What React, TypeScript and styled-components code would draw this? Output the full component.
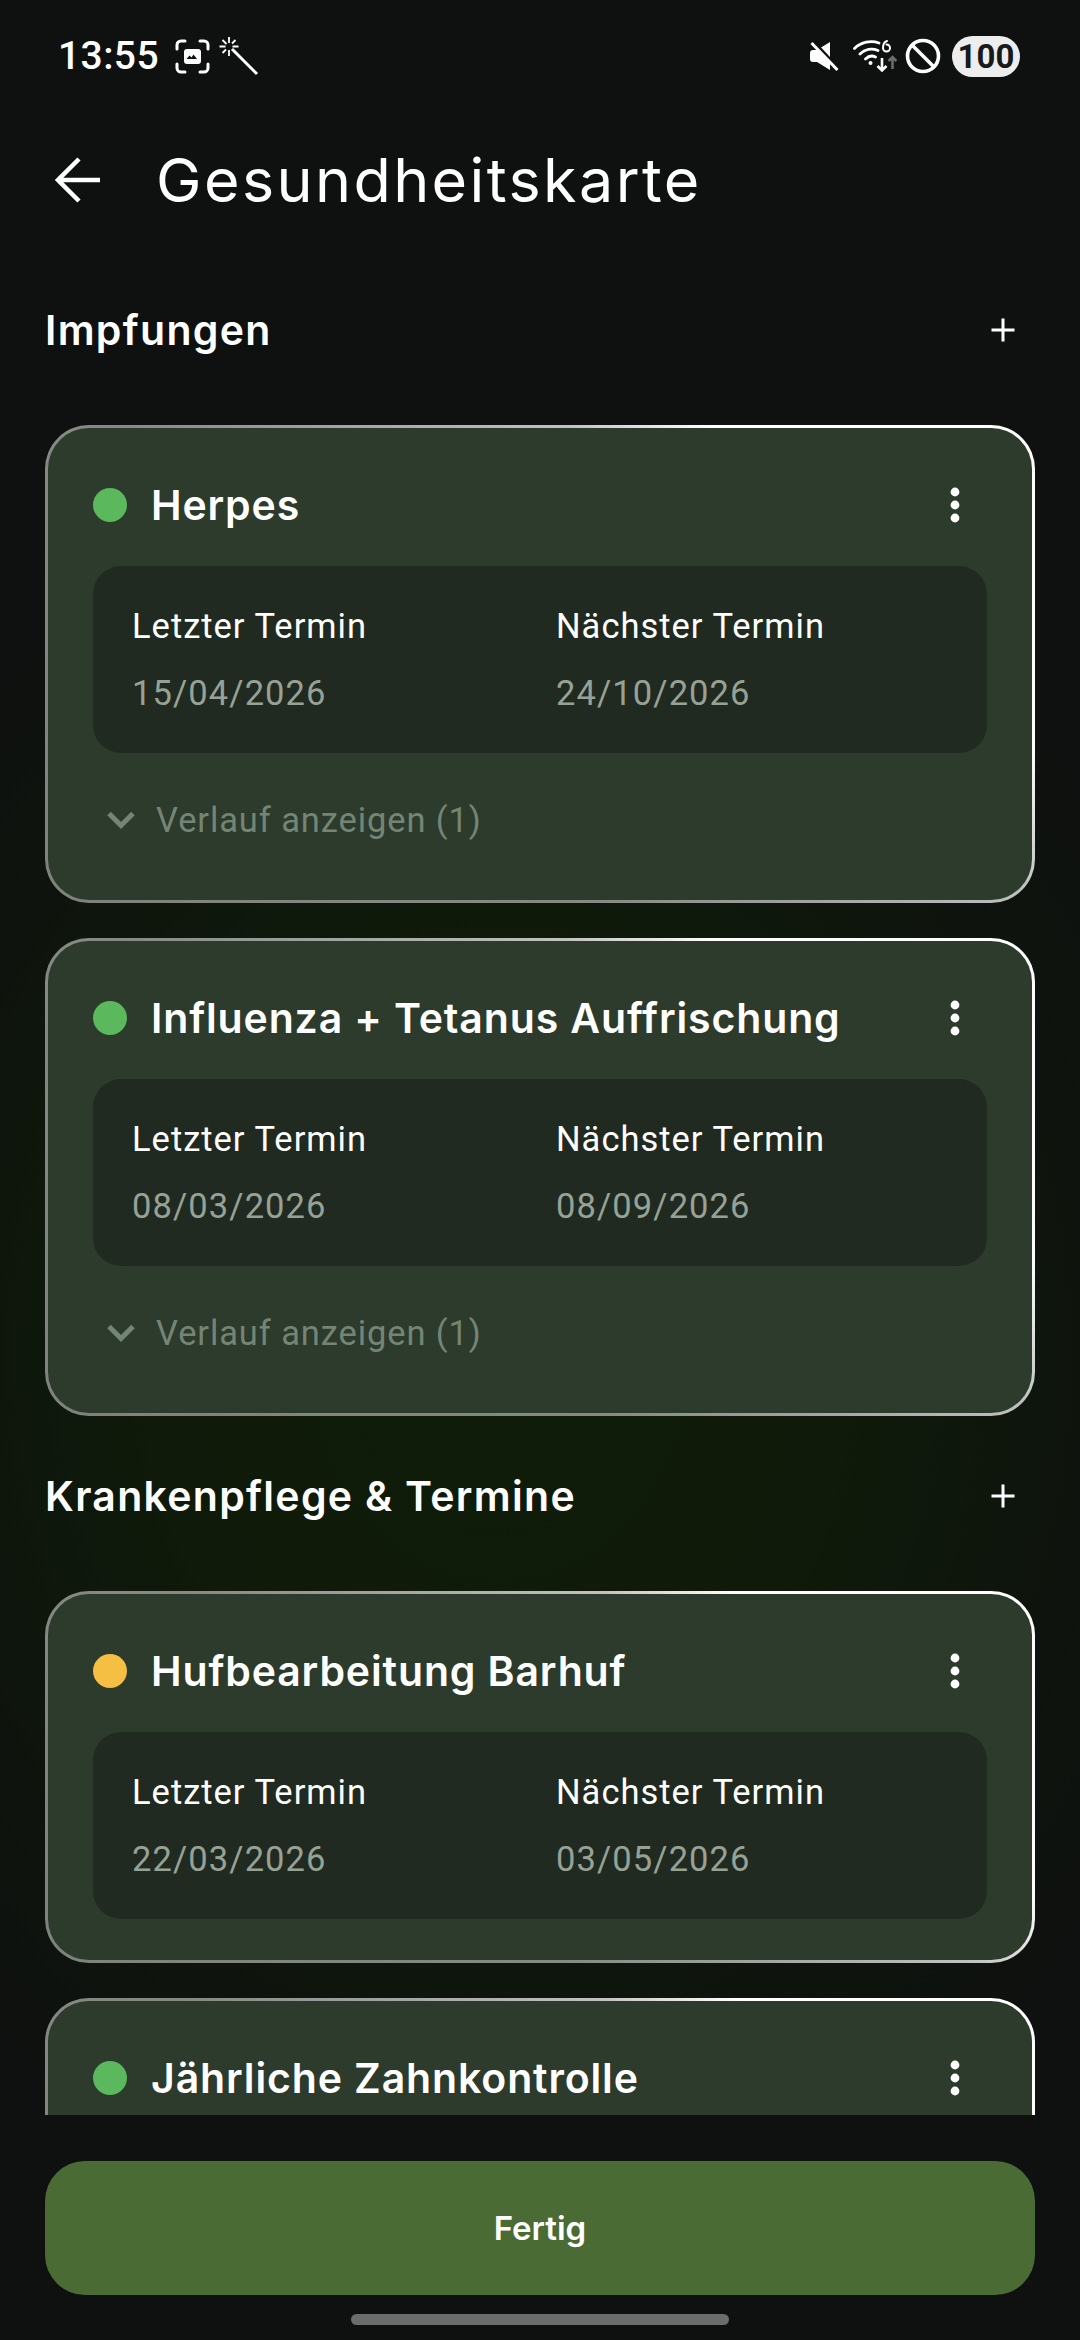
import React from "react";
import styled, { createGlobalStyle } from "styled-components";

const Global = createGlobalStyle`
  html, body { margin: 0; padding: 0; background: #0e110f; }
  * { box-sizing: border-box; }
`;

const Screen = styled.div`
  width: 1080px;
  height: 2340px;
  display: flex;
  flex-direction: column;
  overflow: hidden;
  color: #fff;
  font-family: Roboto, sans-serif;
  background: radial-gradient(ellipse 760px 900px at 46% 58%, #101c09 0%, #0f1a0a 45%, #0e140d 78%, #0e110f 100%), #0e110f;
`;

const StatusBar = styled.div`
  height: 112px;
  flex: none;
  display: flex;
  align-items: center;
  justify-content: space-between;
  padding: 0 60px 0 58px;
`;

const StatusGroup = styled.div`
  display: flex;
  align-items: center;
`;

const Clock = styled.span`
  font-family: Roboto, sans-serif;
  font-size: 39px;
  font-weight: 500;
  letter-spacing: 0.4px;
  margin-right: 16px;
`;

const StatusIcon = styled.svg<{ $gap?: number }>`
  display: block;
  flex: none;
  margin-right: ${(p) => p.$gap ?? 0}px;
`;

const Battery = styled.span`
  width: 68px;
  height: 41px;
  margin-left: 11px;
  border-radius: 21px;
  background: #ecedec;
  color: #17191a;
  font-size: 33px;
  font-weight: 700;
  display: flex;
  align-items: center;
  justify-content: center;
`;

const AppBar = styled.div`
  height: 138px;
  flex: none;
  display: flex;
  align-items: center;
  padding: 0 0 2px 55px;
`;

const Title = styled.h1`
  margin: 0 0 0 55px;
  font-family: Inter, sans-serif;
  font-size: 61px;
  font-weight: 400;
  letter-spacing: 2.4px;
`;

const Scroll = styled.div`
  flex: 1;
  min-height: 0;
  overflow: hidden;
  padding: 0 45px;
`;

const SectionHead = styled.div`
  height: 162px;
  margin-bottom: 13px;
  display: flex;
  align-items: center;
  justify-content: space-between;
  padding: 0 20px 2px 0;
`;

const SectionTitle = styled.h2`
  margin: 0;
  font-family: Inter, sans-serif;
  font-size: 41px;
  font-weight: 600;
  letter-spacing: 1.3px;
`;

const Cards = styled.div`
  display: flex;
  flex-direction: column;
  gap: 35px;
`;

const Card = styled.div`
  border: 3px solid transparent;
  border-radius: 44px;
  padding: 45px 45px 41px;
  background:
    linear-gradient(#2c3b2b, #2c3b2b) padding-box,
    linear-gradient(45deg, #7d827d 0%, #858a85 38%, #c0c2c0 68%, #fff 78%) border-box;
`;

const CardHead = styled.div`
  height: 64px;
  margin-bottom: 29px;
  display: flex;
  align-items: center;
`;

const Dot = styled.span<{ $color: string }>`
  width: 34px;
  height: 34px;
  flex: none;
  border-radius: 50%;
  background: ${(p) => p.$color};
  margin-right: 24px;
`;

const CardTitle = styled.h3`
  margin: 0;
  flex: 1;
  font-family: Inter, sans-serif;
  font-size: 41px;
  font-weight: 600;
  letter-spacing: 0.87px;
`;

const Kebab = styled.svg`
  display: block;
  margin-right: 27px;
`;

const Panel = styled.div`
  height: 187px;
  border-radius: 28px;
  background: #212a20;
  padding: 40px 0 0 39px;
  display: grid;
  grid-template-columns: 424px 1fr;
`;

const Field = styled.div`
  display: flex;
  flex-direction: column;
  gap: 27px;
`;

const Label = styled.span`
  font-size: 34.5px;
  line-height: 40px;
  letter-spacing: 1px;
  color: #fff;
`;

const Value = styled.span`
  font-size: 34.5px;
  line-height: 40px;
  letter-spacing: 1.1px;
  color: #97a296;
`;

const History = styled.div`
  height: 48px;
  margin: 43px 0 15px 13px;
  display: flex;
  align-items: center;
  gap: 20px;
  font-size: 34.5px;
  letter-spacing: 0.9px;
  color: #748575;
`;

const Footer = styled.div`
  height: 225px;
  flex: none;
  background: #0e110f;
  padding: 46px 45px 0;
  display: flex;
  flex-direction: column;
  align-items: center;
`;

const Done = styled.button`
  width: 100%;
  height: 134px;
  border: 0;
  border-radius: 40px;
  background: #4a6b34;
  color: #fff;
  font-family: Inter, sans-serif;
  font-size: 33px;
  font-weight: 600;
`;

const HomeBar = styled.div`
  width: 378px;
  height: 11px;
  margin-top: 19px;
  border-radius: 6px;
  background: #6b6c6b;
`;

const Chevron = () => (
  <svg width="30" height="20" viewBox="0 0 30 20" fill="none">
    <path d="M3 3.500l12 12 12-12" stroke="#748575" strokeWidth="5" />
  </svg>
);

const Dots = () => (
  <Kebab width="10" height="36" viewBox="0 0 10 36" fill="#fff">
    <circle cx="5" cy="5" r="4.4" />
    <circle cx="5" cy="18" r="4.4" />
    <circle cx="5" cy="31" r="4.4" />
  </Kebab>
);

const Plus = () => (
  <svg width="24" height="24" viewBox="0 0 24 24" fill="none" stroke="#fff" strokeWidth="3">
    <path d="M0.5 12h23M12 0.5v23" />
  </svg>
);

type Item = { title: string; c: string; a?: string; b?: string; h?: boolean };

const herpes: Item = { title: "Herpes", c: "#5cb85c", a: "15/04/2026", b: "24/10/2026", h: true };
const flu: Item = { title: "Influenza + Tetanus Auffrischung", c: "#5cb85c", a: "08/03/2026", b: "08/09/2026", h: true };
const huf: Item = { title: "Hufbearbeitung Barhuf", c: "#f4bf42", a: "22/03/2026", b: "03/05/2026" };
const zahn: Item = { title: "Jährliche Zahnkontrolle", c: "#5cb85c" };

const Entry = ({ d }: { d: Item }) => (
  <Card>
    <CardHead>
      <Dot $color={d.c} />
      <CardTitle>{d.title}</CardTitle>
      <Dots />
    </CardHead>
    <Panel>
      {d.a && (
        <>
          <Field>
            <Label>Letzter Termin</Label>
            <Value>{d.a}</Value>
          </Field>
          <Field>
            <Label>Nächster Termin</Label>
            <Value>{d.b}</Value>
          </Field>
        </>
      )}
    </Panel>
    {d.h && (
      <History>
        <Chevron />
        Verlauf anzeigen (1)
      </History>
    )}
  </Card>
);

export default function App() {
  return (
    <Screen>
      <Global />
      <StatusBar>
        <StatusGroup>
          <Clock>13:55</Clock>
          <StatusIcon $gap={9} width="35" height="35" viewBox="0 0 35 35" fill="none">
            <path d="M2 10V6a4 4 0 0 1 4-4h4M25 2h4a4 4 0 0 1 4 4v4M33 25v4a4 4 0 0 1-4 4h-4M10 33H6a4 4 0 0 1-4-4v-4" stroke="#fff" strokeWidth="3" strokeLinecap="round" />
            <rect x="9" y="10" width="17" height="15" rx="3" fill="#fff" />
            <path d="M11.5 20l3-3.5 2 2 2-3 3.5 4.5z" fill="#0e110f" />
          </StatusIcon>
          <StatusIcon width="40" height="40" viewBox="0 0 40 40" fill="none" stroke="#fff">
            <path d="M13 13l25 25" strokeWidth="3" />
            <path d="M10 1v6M10 14v6M0.5 10.500h6M13.500 10.500h6M3.500 4l4 4M16.500 4l-3.500 3.500M3.500 17l3.500-3.500" strokeWidth="1.800" />
          </StatusIcon>
        </StatusGroup>
        <StatusGroup>
          <StatusIcon $gap={14} width="30" height="32" viewBox="0 0 30 32" fill="none">
            <path d="M1 13a3 3 0 0 1 3-3h4L21 2v28L8 22H4a3 3 0 0 1-3-3z" fill="#fff" />
            <path d="M5 2l25 27" stroke="#0e110f" strokeWidth="3" />
            <path d="M2.500 3l26 27" stroke="#fff" strokeWidth="3" />
          </StatusIcon>
          <StatusIcon $gap={8} width="44" height="34" viewBox="0 0 44 34" fill="none" stroke="#fff" strokeLinecap="round">
            <path d="M1.500 9.500C8 3 18 1 26 4M7 15c5-5 12-6 18-3.500M12.500 20c3-3 7-3.500 10-2" strokeWidth="2.800" />
            <circle cx="17.500" cy="24" r="2" fill="#fff" stroke="none" />
            <path d="M34 2c-3 1-4 4-4 7a3.500 3.500 0 1 0 3.500-3.500" strokeWidth="2" />
            <path d="M29 19v12M24.500 27l4.500 4.500 4.500-4.500" strokeWidth="2.600" strokeLinecap="butt" />
            <path d="M39.500 30V18M35.500 22l4-4 4 4" stroke="#6b6c6b" strokeWidth="2.600" strokeLinecap="butt" />
          </StatusIcon>
          <StatusIcon width="36" height="36" viewBox="0 0 36 36" fill="none" stroke="#fff" strokeWidth="3.600">
            <circle cx="18" cy="18" r="15.500" />
            <path d="M7 7l22 22" />
          </StatusIcon>
          <Battery>100</Battery>
        </StatusGroup>
      </StatusBar>
      <AppBar>
        <svg width="46" height="46" viewBox="0 0 46 46" fill="none" stroke="#fff" strokeWidth="4.500">
          <path d="M45 23H4M24 2L3 23l21 21" />
        </svg>
        <Title>Gesundheitskarte</Title>
      </AppBar>
      <Scroll>
        <SectionHead>
          <SectionTitle>Impfungen</SectionTitle>
          <Plus />
        </SectionHead>
        <Cards>
          <Entry d={herpes} />
          <Entry d={flu} />
        </Cards>
        <SectionHead>
          <SectionTitle>Krankenpflege &amp; Termine</SectionTitle>
          <Plus />
        </SectionHead>
        <Cards>
          <Entry d={huf} />
          <Entry d={zahn} />
        </Cards>
      </Scroll>
      <Footer>
        <Done>Fertig</Done>
        <HomeBar />
      </Footer>
    </Screen>
  );
}
